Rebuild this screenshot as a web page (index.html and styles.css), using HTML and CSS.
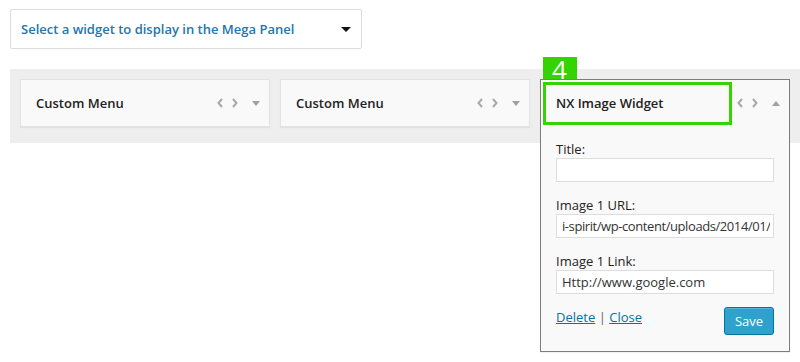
FILE: index.html
```html
<!DOCTYPE html>
<html lang="en">
  <head>
    <meta charset="UTF-8" />
    <meta name="viewport" content="width=device-width, initial-scale=1.0" />
    <title>Mega Panel</title>
    <link rel="stylesheet" href="styles.css">
  </head>
  <body>
    <div class="page">
      <div class="select">
        <span>Select a widget to display in the Mega Panel</span>
        <span class="caret"></span>
      </div>

      <div class="panel">
        <div class="widget">
          <div class="widget-top">
            <h3>Custom Menu</h3>
            <div class="controls">
              <svg width="6" height="10" viewBox="0 0 6 10"><polyline points="5,1 1.5,5 5,9" /></svg>
              <svg width="6" height="10" viewBox="0 0 6 10"><polyline points="1,1 4.5,5 1,9" /></svg>
              <span class="tri down"></span>
            </div>
          </div>
        </div>

        <div class="widget">
          <div class="widget-top">
            <h3>Custom Menu</h3>
            <div class="controls">
              <svg width="6" height="10" viewBox="0 0 6 10"><polyline points="5,1 1.5,5 5,9" /></svg>
              <svg width="6" height="10" viewBox="0 0 6 10"><polyline points="1,1 4.5,5 1,9" /></svg>
              <span class="tri down"></span>
            </div>
          </div>
        </div>

        <div class="widget open">
          <div class="widget-top">
            <h3>NX Image Widget</h3>
            <div class="controls">
              <svg width="6" height="10" viewBox="0 0 6 10"><polyline points="5,1 1.5,5 5,9" /></svg>
              <svg width="6" height="10" viewBox="0 0 6 10"><polyline points="1,1 4.5,5 1,9" /></svg>
              <span class="tri up"></span>
            </div>
          </div>
          <div class="marker">4</div>
          <div class="highlight"></div>

          <div class="widget-body">
            <div class="field">
              <label for="title">Title:</label>
              <input type="text" id="title" />
            </div>
            <div class="field">
              <label for="url">Image 1 URL:</label>
              <input type="text" id="url" class="narrow" value="i-spirit/wp-content/uploads/2014/01/" />
            </div>
            <div class="field">
              <label for="link">Image 1 Link:</label>
              <input type="text" id="link" value="Http://www.google.com" />
            </div>
            <div class="actions">
              <div class="links">
                <a href="#">Delete</a> <span class="sep">|</span> <a href="#">Close</a>
              </div>
              <button type="button">Save</button>
            </div>
          </div>
        </div>
      </div>
    </div>
  </body>
</html>
```

FILE: styles.css
```css
*,
*::before,
*::after {
  box-sizing: border-box;
}
* {
  margin: 0;
}
html,
body {
  height: 100%;
}
body {
  font-family: "Open Sans", "Liberation Sans", sans-serif;
  font-size: 13px;
  color: #222;
  background-color: #fff;
}

.page {
  min-height: 100%;
  padding: 9px 0 0 10px;
}

.select {
  display: flex;
  align-items: center;
  justify-content: space-between;
  width: 352px;
  height: 40px;
  padding: 0 10px;
  border: 1px solid #dcdcdc;
  border-radius: 2px;
  color: #2376ad;
  font-weight: 600;
}

.caret {
  width: 0;
  height: 0;
  border-left: 5px solid transparent;
  border-right: 5px solid transparent;
  border-top: 5px solid #111;
}

.panel {
  display: flex;
  align-items: flex-start;
  gap: 10px;
  height: 74px;
  margin-top: 20px;
  padding: 10px 0 0 10px;
  background-color: #eee;
}

.widget {
  position: relative;
  flex: none;
  width: 250px;
  background-color: #f9f9f9;
  border: 1px solid #e3e3e3;
  box-shadow: 0 1px 1px rgba(0, 0, 0, 0.05);
}

.widget.open {
  border-color: #7d7d7d;
}

.widget-top {
  display: flex;
  align-items: center;
  justify-content: space-between;
  height: 46px;
  padding: 0 9px 0 15px;
}

.widget-top h3 {
  font-size: 13px;
  font-weight: 600;
  color: #222;
}

.controls {
  display: flex;
  align-items: center;
  gap: 9px;
}

.controls svg {
  fill: none;
  stroke: #a8a8a8;
  stroke-width: 2;
}

.controls .tri {
  margin-left: 5px;
  width: 0;
  height: 0;
  border-left: 4px solid transparent;
  border-right: 4px solid transparent;
}

.tri.down {
  border-top: 5px solid #a0a0a0;
}

.tri.up {
  border-bottom: 5px solid #a0a0a0;
}

.marker {
  position: absolute;
  left: 2px;
  top: -23px;
  width: 34px;
  height: 22px;
  background-color: #33d400;
  color: #fff;
  font-size: 26px;
  line-height: 24px;
  padding-left: 9px;
}

.highlight {
  position: absolute;
  left: 2px;
  top: 2px;
  width: 189px;
  height: 43px;
  border: 3px solid #33d400;
}

.widget-body {
  padding: 14px 15px 16px;
}

.field {
  display: flex;
  flex-direction: column;
  margin-bottom: 14px;
}

.field label {
  line-height: 18px;
  color: #222;
}

.field input {
  height: 24px;
  padding: 0 5px;
  border: 1px solid #ddd;
  font-family: inherit;
  font-size: 13px;
  color: #333;
  background-color: #fff;
}

.field input.narrow {
  padding: 0 3px 0 5px;
  letter-spacing: -0.42px;
}

.actions {
  display: flex;
  justify-content: space-between;
  align-items: flex-start;
  margin-top: -1px;
}

.links {
  line-height: 20px;
}

.links a {
  color: #0074a2;
}

.links .sep {
  color: #666;
}

button[type="button"] {
  width: 50px;
  height: 28px;
  background-color: #2ea2cc;
  border: 1px solid #0074a2;
  border-radius: 3px;
  color: #fff;
  font-family: inherit;
  font-size: 13px;
  box-shadow: inset 0 1px 0 rgba(120, 200, 230, 0.5);
  cursor: pointer;
}
```
